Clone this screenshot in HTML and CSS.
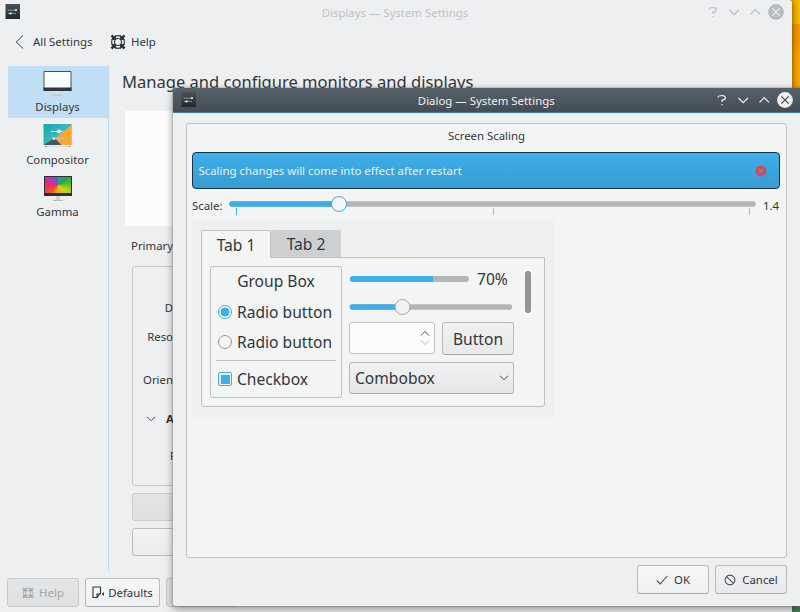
FILE: index.html
```html
<!DOCTYPE html>
<html lang="en">
<head>
<meta charset="utf-8">
<title>System Settings</title>
<link rel="stylesheet" href="styles.css">
</head>
<body>
<svg width="0" height="0" class="defs" aria-hidden="true">
  <defs>
    <linearGradient id="dark" x1="0" y1="0" x2="0" y2="1"><stop offset="0" stop-color="#4a5056"/><stop offset="1" stop-color="#24282c"/></linearGradient>
    <linearGradient id="teal" x1="0" y1="0" x2="1" y2="1"><stop offset="0" stop-color="#12a9a8"/><stop offset="1" stop-color="#5fc9d8"/></linearGradient>
    <symbol id="app" viewBox="0 0 16 16"><path fill="url(#dark)" d="M.5 0H15V15H.5z"/><path stroke="#aab4ba" stroke-width=".8" d="M2.500 6.200h9M3 9.400h8"/><path stroke="#3a87b5" stroke-width=".8" d="M2.500 6.200h5M7 9.400h4"/><circle cx="11" cy="6" r=".9" fill="#fff"/><circle cx="5.500" cy="9.600" r="1" fill="#fff"/></symbol>
    <symbol id="ring" viewBox="0 0 16 16"><g fill="none" stroke="currentColor"><circle cx="8" cy="8" r="6.400" stroke-width="1.200"/><circle cx="8" cy="8" r="3.500" stroke-width="1.100"/><path stroke-width="1" d="M5.500 1.500v4h-4M10.500 1.500v4h4M1.500 10.500h4v4M14.500 10.500h-4v4"/><path stroke-width="2.600" d="M1.500 1.500l3.300 3.300M14.500 1.500l-3.300 3.300M1.500 14.500l3.300-3.300M14.500 14.500l-3.300-3.300"/></g></symbol>
    <symbol id="controls" viewBox="0 0 86 18"><g fill="none" stroke="currentColor" stroke-width="1.200"><path d="M5 6.500Q5.200 4.500 9 4.500 12.400 4.600 12.400 7 12.400 8.800 9 9.200V11M9 13v1.300M25.500 7l4.700 4.700L34.900 7M46.500 11.300l4.700-4.700 4.700 4.700"/></g><circle cx="72" cy="9" r="7.900" fill="currentColor"/><path class="cross" d="M68.400 5.400l7.200 7.200M75.600 5.400l-7.200 7.200" stroke-width="1.200"/></symbol>
  </defs>
</svg>
<div class="desktop">
  <main class="window settings">
    <header class="titlebar">
      <svg class="app"><use href="#app"/></svg>
      <h1>Displays — System Settings</h1>
      <svg class="controls"><use href="#controls"/></svg>
    </header>
    <nav class="toolbar">
      <svg class="back" viewBox="0 0 9 14"><path d="M8 .5L1.200 7 8 13.500" fill="none" stroke="#31363b"/></svg>
      <span class="all">All Settings</span>
      <svg class="ring"><use href="#ring"/></svg>
      <span>Help</span>
    </nav>
    <div class="columns">
      <aside>
        <div class="item selected">
          <svg viewBox="0 0 30 28"><path fill="#f7fcfd" stroke="#485159" d="M1 .500h27v19H1z"/><path fill="#30363a" d="M.500 16.500h28v3.500H.500z"/><path fill="#d9e0e4" d="M12.500 20h4v3.500h-4z"/><path stroke="#c7b9a0" d="M10 24h9"/></svg>
          <span>Displays</span>
        </div>
        <div class="item">
          <svg viewBox="0 0 30 28"><path fill="url(#teal)" d="M.500 0h28v21H.500z"/><path fill="#fda72f" d="M28.500 1L11.500 15l7 6h10z"/><path fill="#4a555c" d="M.500 21l11-7 7 7z"/><path stroke="#edf6f6" d="M8 7.500h12"/><path stroke="#c9c4b4" d="M9 14.500h12"/><circle cx="16" cy="7.500" r="2" fill="#fff"/><circle cx="11" cy="14.500" r="1.600" fill="#d7dcdf"/><path stroke="#d5d9dc" d="M2 22.500h25"/><path fill="#555" d="M2 22h1v1H2zm24 0h1v1h-1z"/></svg>
          <span>Compositor</span>
        </div>
        <div class="item">
          <div class="gamma"><div class="hues"></div><div class="neck"></div><div class="foot"></div></div>
          <span>Gamma</span>
        </div>
      </aside>
      <section class="content">
        <h2>Manage and configure monitors and displays</h2>
        <div class="preview"></div>
        <p class="primary">Primary</p>
        <div class="options">
          <span>D</span><span>Reso</span><span>Orien</span>
          <b><svg viewBox="0 0 10 6"><path d="M1 .800l4 4 4-4" fill="none" stroke="#4d5257"/></svg>A</b>
          <span>R</span>
        </div>
        <div class="blank disabled"></div>
        <div class="blank"></div>
      </section>
    </div>
    <footer>
      <button class="disabled help"><svg class="ring"><use href="#ring"/></svg>Help</button>
      <button class="defaults"><svg viewBox="0 0 12 13"><path d="M1 1h7.500v6L5 11.500H1zM8.500 8H5v3.500" fill="none" stroke="#31363b" stroke-width="1.100"/><path d="M12 6v4L9.800 8z" fill="#31363b"/></svg>Defaults</button>
      <button class="disabled reset"></button>
    </footer>
  </main>

  <section class="window dialog">
    <header class="titlebar">
      <svg class="app"><use href="#app"/></svg>
      <h1>Dialog — System Settings</h1>
      <svg class="controls"><use href="#controls"/></svg>
    </header>
    <div class="frame">
      <h3>Screen Scaling</h3>
      <div class="message"><span>Scaling changes will come into effect after restart</span>
        <svg viewBox="0 0 12 12"><circle cx="6" cy="6" r="5.400" fill="#da4453"/><path d="M3.800 3.800l4.400 4.400M8.200 3.800L3.800 8.200" stroke="#4f9fc9" stroke-width="1.200"/></svg>
      </div>
      <div class="scale">
        <label>Scale:</label>
        <svg width="528" height="20" viewBox="0 0 528 20"><path d="M3 8h521" stroke="#b4b5b6" stroke-width="5.500" stroke-linecap="round"/><path d="M3 8h107" stroke="#3daee9" stroke-width="5.500" stroke-linecap="round"/><path d="M7.500 12v7" stroke="#3daee9"/><path d="M264.500 12v7M520.500 12v7" stroke="#b9babb"/><circle cx="110" cy="8" r="7.500" fill="#f5f6f6" stroke="#3daee9"/></svg>
        <span>1.4</span>
      </div>
      <div class="sample">
        <div class="tabs"><span class="tab active">Tab 1</span><span class="tab">Tab 2</span></div>
        <div class="pane">
          <div class="group">
            <div class="legend">Group Box</div>
            <div class="choice"><i class="radio on"></i>Radio button</div>
            <div class="choice"><i class="radio"></i>Radio button</div>
            <hr>
            <div class="choice check"><i class="box"></i>Checkbox</div>
          </div>
          <div class="widgets">
            <div class="progress"><div class="bar"><div class="fill"></div></div><span>70%</span></div>
            <svg class="slide" width="164" height="18" viewBox="0 0 164 18"><path d="M3.500 9h157" stroke="#b4b5b6" stroke-width="5.500" stroke-linecap="round"/><path d="M3.500 9h50" stroke="#3daee9" stroke-width="5.500" stroke-linecap="round"/><circle cx="53.500" cy="9" r="7.500" fill="#f2f2f3" stroke="#a4a6a8"/></svg>
            <div class="row">
              <div class="spin"><svg viewBox="0 0 10 16"><path d="M1 5.500l4-4 4 4" fill="none" stroke="#4d5257"/><path d="M1 10.500l4 4 4-4" fill="none" stroke="#b4b6b8"/></svg></div>
              <button class="sample-button">Button</button>
            </div>
            <div class="combo"><span>Combobox</span><svg viewBox="0 0 10 6"><path d="M1 .800l4 4 4-4" fill="none" stroke="#4d5257"/></svg></div>
          </div>
          <div class="scrollbar"></div>
        </div>
      </div>
    </div>
    <div class="actions">
      <button class="ok"><svg viewBox="0 0 12 12"><path d="M.800 6.500l3.400 3.400L11.300 2" fill="none" stroke="#4d5257" stroke-width="1.100"/></svg>OK</button>
      <button class="cancel"><svg viewBox="0 0 12 12"><circle cx="6" cy="6" r="4.900" fill="none" stroke="#4d5257" stroke-width="1.100"/><path d="M2.600 2.600l6.800 6.800" stroke="#4d5257" stroke-width="1.100"/></svg>Cancel</button>
    </div>
  </section>
</div>
</body>
</html>
```
FILE: styles.css
```css
* { box-sizing: border-box; }
body { margin: 0; overflow: hidden; font: 11.400px/18px "Noto Sans", sans-serif; color: #31363b; }
h1, h2, h3, p { margin: 0; font-weight: 400; }
svg { display: block; flex: none; }
.defs { position: absolute; }
.desktop { position: relative; width: 800px; height: 612px; overflow: hidden; background: linear-gradient(#f8bb00 0 24px, #f39a00 24px 42px, #faa700 60px 90px, #4c8b61 600px); }
.window { position: absolute; background: #eeeff1; }
.settings { left: 0; top: 0; width: 792px; height: 612px; border-radius: 0 3px 0 0; box-shadow: 1px 0 6px rgba(70,40,0,.65); display: flex; flex-direction: column; }
.titlebar { display: flex; align-items: center; height: 24px; }
.titlebar h1 { flex: 1; text-align: center; font-size: inherit; padding-top: 1px; }
.app { width: 16px; height: 16px; }
.controls { width: 86px; height: 18px; }
.cross { stroke: var(--cross); }
.settings .titlebar { padding-left: 5px; color: #c0c3c5; }
.settings .controls { color: #b8bcbf; margin-right: 2px; --cross: #f2f3f4; }
.settings .titlebar h1 { padding-left: 65px; }
.toolbar { display: flex; align-items: center; height: 36px; padding-left: 15px; }
.back { width: 9px; height: 14px; margin-right: 9px; }
.all { width: 77px; }
.ring { width: 16px; height: 16px; margin-right: 5px; }
.columns { display: flex; height: 512px; padding: 5px 0 0 8px; }
aside { width: 101px; height: 506px; padding-top: .500px; border-right: 1px solid #b5dcef; }
.item { height: 52px; margin-bottom: .500px; padding-top: 5.500px; display: flex; flex-direction: column; align-items: center; }
.item > svg { width: 30px; height: 28px; }
.item span { line-height: 16px; margin-right: 1px; }
.selected { background: #c1dff4; }
.gamma { height: 28px; margin-right: 1px; }
.hues { width: 28px; height: 20px; border: 1px solid #2c3135; border-bottom-width: 3px; background: conic-gradient(#2c9ab8, #23a455 15%, #6fbe24 25%, #c9d417 35%, #f3b315 50%, #ee5a22 62%, #e9286a 75%, #a83bc2 88%, #3f6fc4); }
.neck { width: 4px; height: 4px; margin: 0 auto; background: #d1d4d7; }
.foot { width: 10px; height: 1px; margin: 0 auto; background: #b5babe; }
.content { flex: 1; padding: 5px 0 0 13px; }
h2 { font-size: 16.550px; line-height: 24px; white-space: nowrap; }
.preview { width: 600px; height: 115px; margin: 17px 0 0 3px; background: #fcfcfc; }
.primary { margin: 11px 0 0 9px; }
.options { width: 600px; height: 220px; margin: 11px 0 0 10px; padding: 32px 0 0; border: 1px solid #c5c7c9; border-radius: 3px; display: grid; grid-template-rows: 29px 43px 39px 37px 18px; justify-content: start; grid-template-columns: 40px; }
.options span, .options b { justify-self: end; align-self: start; line-height: 18px; }
.options b { display: flex; align-items: center; gap: 10px; margin-right: -1px; }
.options span:last-child { width: 3px; }
.options svg { width: 10px; height: 6px; }
.blank { width: 600px; height: 28px; margin: 7px 0 0 10px; border: 1px solid #b9bbbd; border-radius: 3px; background: linear-gradient(#f2f3f4, #eaebec); }
button { font: inherit; color: inherit; margin: 0; padding: 0; height: 29px; border: 1px solid #b8babc; border-bottom-color: #a9abad; border-radius: 3px; background: linear-gradient(#f7f7f8, #eff0f1); display: flex; align-items: center; justify-content: center; }
.disabled { background: linear-gradient(#e4e5e6, #dfe0e1); border-color: #c8cacb; color: #a5a8aa; }
footer { display: flex; gap: 6px; padding: 6px 0 0 7px; }
.help { width: 72px; }
.help .ring { width: 12px; height: 12px; }
.defaults { width: 75px; }
.defaults svg { width: 12px; height: 13px; margin-right: 4px; }
.reset { width: 72px; }
.dialog { left: 173px; top: 88px; width: 635px; height: 518px; border-radius: 3px; box-shadow: 0 0 2px #777, 0 3px 8px rgba(0,0,0,.4); }
.dialog .titlebar { height: 25px; padding-left: 8px; background: linear-gradient(#56616a, #454d54); color: #eff0f1; border-bottom: 1px solid #3083b5; border-radius: 3px 3px 0 0; }
.dialog .titlebar h1 { padding-left: 63px; }
.dialog .controls { margin-right: 9.500px; --cross: #414950; }
.frame { width: 601px; height: 435px; margin: 10px 0 0 13px; padding: 3px 5px; border: 1px solid #bfc1c2; border-radius: 3px; background: #f3f4f4; }
h3 { font-size: inherit; line-height: 17px; text-align: center; }
.message { display: flex; align-items: center; justify-content: space-between; width: 588px; height: 37px; margin: 8px 0 0; padding: 0 12px 0 5.500px; border: 1px solid #17354a; border-radius: 4px; background: linear-gradient(#3eafea, #379bd2); color: #e6f3fa; }
.message svg { width: 12px; height: 12px; }
.scale { display: flex; align-items: center; height: 31px; }
.scale label { width: 37px; margin: 3px 0 0; }
.scale svg { margin-top: 3px; }
.scale span { margin: 3px 0 0 6px; }
.sample { width: 362px; height: 197px; padding: 10px 0 0 9px; background: #eeeff1; font-size: 15.600px; line-height: 22px; }
.tabs { display: flex; align-items: flex-end; }
.tab { width: 70px; height: 27px; line-height: 28px; text-align: center; background: #cdcfd1; border-radius: 2px 2px 0 0; }
.active { width: 70px; height: 28px; margin-bottom: -1px; background: #f3f4f4; border: 1px solid #bfc1c2; border-bottom: 0; position: relative; }
.pane { display: flex; width: 344px; height: 150px; padding: 8px; border: 1px solid #bfc1c2; border-radius: 0 0 3px 3px; background: #f3f4f4; }
.group { width: 132px; height: 132px; padding: 3px 5px; border: 1px solid #bfc1c2; border-radius: 3px; }
.legend { text-align: center; height: 27px; }
.choice { display: flex; align-items: center; gap: 5px; height: 30px; padding-left: 2px; white-space: nowrap; }
.radio { width: 14px; height: 14px; flex: none; border: 1px solid #939699; border-radius: 50%; }
.on { border-color: #3daee9; background: radial-gradient(circle, #3daee9 0 4.200px, transparent 4.700px); }
hr { width: 120px; height: 1px; margin: 3px 0; border: 0; background: #bfc1c2; }
.box { width: 14px; height: 14px; border: 1px solid #3daee9; border-radius: 2px; background: linear-gradient(#3daee9, #3daee9) center/9px 9px no-repeat; }
.widgets { width: 165px; margin-left: 7px; }
.progress { display: flex; align-items: center; height: 26px; padding-left: 1px; }
.bar { width: 119px; height: 6px; border-radius: 3px; overflow: hidden; background: #b4b5b6; }
.fill { width: 70%; height: 6px; background: #3daee9; }
.progress span { margin-left: 8px; }
.slide { margin: 6px 0 0; }
.row { display: flex; gap: 7px; margin-top: 6px; }
.spin { width: 86px; height: 32px; border: 1px solid #bfc1c2; border-radius: 3px; background: #fcfcfc; display: flex; align-items: center; justify-content: flex-end; padding-right: 4px; }
.spin svg { width: 10px; height: 16px; }
.sample-button { width: 72px; height: 33px; background: linear-gradient(#f1f1f2, #e8e9eb); }
.combo { display: flex; align-items: center; justify-content: space-between; height: 32px; margin-top: 7px; padding: 0 4px 0 5px; border: 1px solid #b8babc; border-bottom-color: #a9abad; border-radius: 3px; background: linear-gradient(#f1f1f2, #e6e7e9); }
.combo span { margin-top: -1px; }
.combo svg { width: 10px; height: 6px; }
.scrollbar { width: 6px; height: 42px; margin: 5px 0 0 11px; border-radius: 3px; background: #909295; }
.actions { display: flex; gap: 6px; padding: 7px 0 0 464px; }
.ok { width: 72px; }
.cancel { width: 72px; background: linear-gradient(#f1f1f2, #e8e9eb); }
.actions svg { width: 12px; height: 12px; margin-right: 6px; }
```
